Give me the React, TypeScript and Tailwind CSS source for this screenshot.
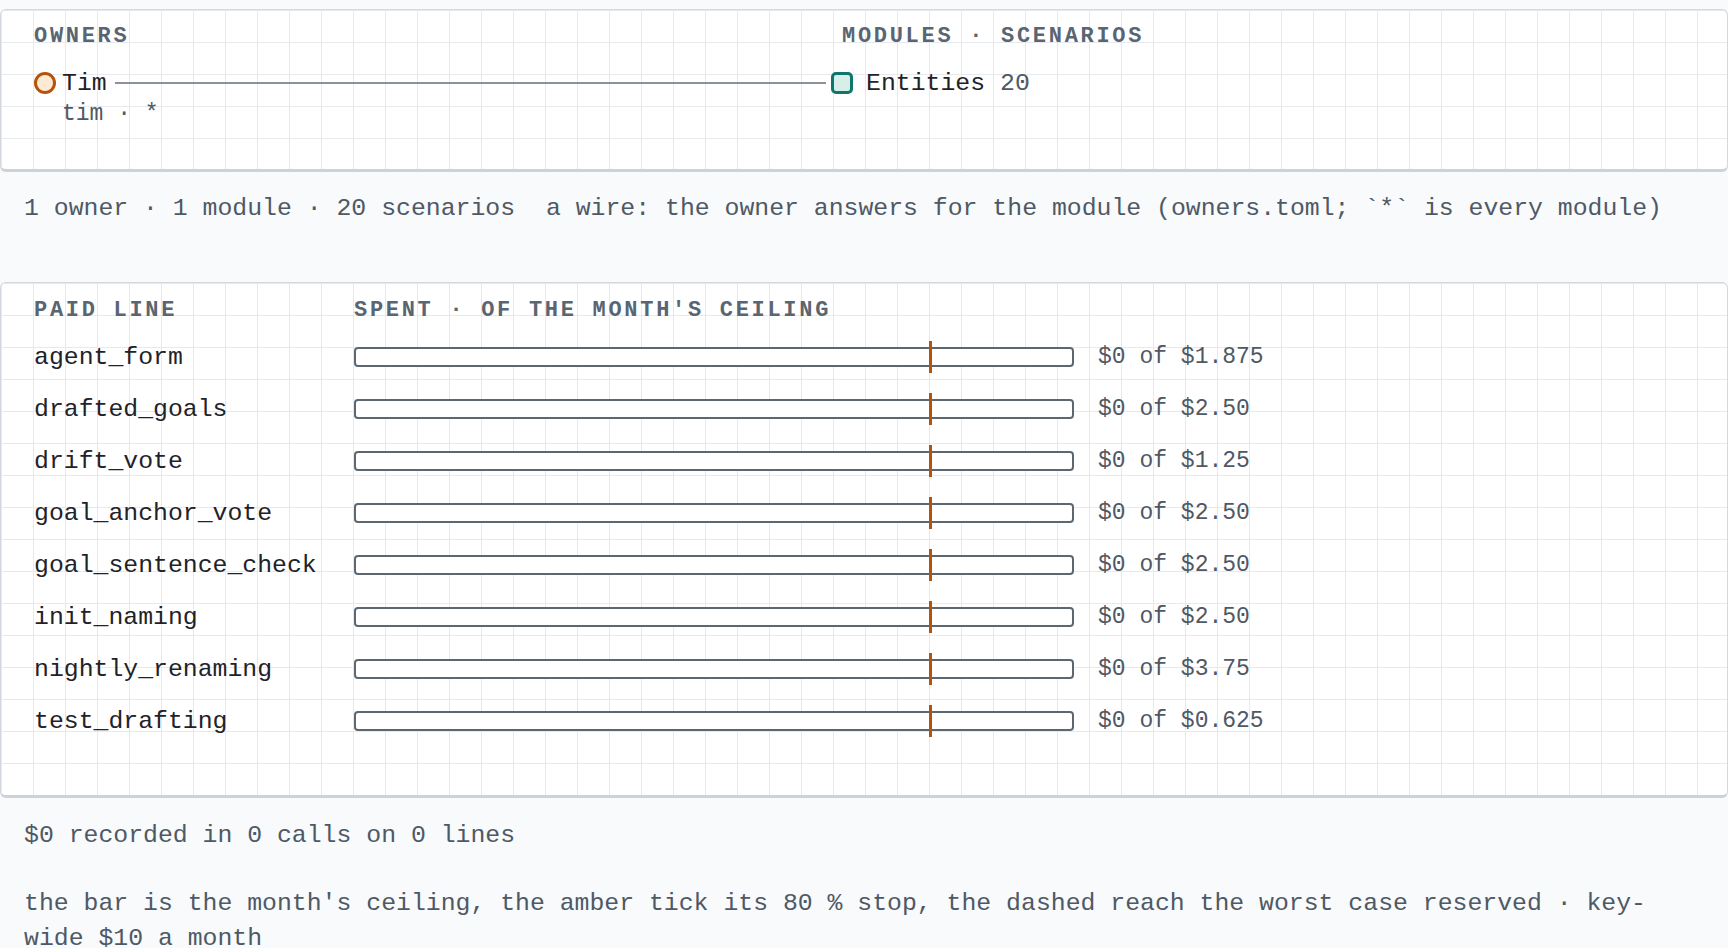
import React from 'react';

interface PaidLine {
  name: string;
  ceiling: string;
}

const lines: PaidLine[] = [
  { name: 'agent_form', ceiling: '$1.875' },
  { name: 'drafted_goals', ceiling: '$2.50' },
  { name: 'drift_vote', ceiling: '$1.25' },
  { name: 'goal_anchor_vote', ceiling: '$2.50' },
  { name: 'goal_sentence_check', ceiling: '$2.50' },
  { name: 'init_naming', ceiling: '$2.50' },
  { name: 'nightly_renaming', ceiling: '$3.75' },
  { name: 'test_drafting', ceiling: '$0.625' },
];

// white card on a 32px graph-paper grid
const panel =
  'rounded-md border border-[#d3d8de] border-b-[3px] border-b-[#cdd2d8] bg-white bg-[linear-gradient(to_right,#e6e9ed_1px,transparent_1px),linear-gradient(to_bottom,#e6e9ed_1px,transparent_1px)] bg-size-[32px_32px]';

const heading = 'text-[22px] leading-6 font-bold tracking-[2.7px] uppercase text-[#5a6572]';

function Heading({ children }: { children: React.ReactNode }) {
  return <h2 className={heading}>{children}</h2>;
}

function CeilingBar({ line }: { line: PaidLine }) {
  return (
    <div className="flex h-[52px] items-center">
      <span className="w-[288px] text-[#1f2328]">{line.name}</span>
      <div className="relative ml-8 h-5 w-[720px] rounded-[4px] border-2 border-[#5d6772] bg-white">
        {/* 80 % stop */}
        <span className="absolute top-[-8px] left-[573px] h-8 w-[3px] bg-[#b45309]" />
      </div>
      <span className="ml-6 text-[23px]">$0 of {line.ceiling}</span>
    </div>
  );
}

export default function App() {
  return (
    <div className="min-h-screen bg-[#f8fafc] pt-[9px] font-['Liberation_Mono','DejaVu_Sans_Mono',monospace] text-[24.8px] leading-[35px] text-[#4f5965]">
      <section className={`${panel} pt-[15px] pb-[40px] pl-[33px]`}>
        <div className="grid grid-cols-[808px_1fr]">
          <div>
            <Heading>Owners</Heading>
            <div className="mt-[18px] flex h-8 items-center">
              <span className="size-[22px] shrink-0 rounded-full border-[3px] border-[#b45309] bg-[#feead4]" />
              <span className="ml-1.5 text-[#1f2328]">Tim</span>
              <span className="mr-4 ml-2 h-0.5 flex-1 bg-[#8b929a]" />
            </div>
            <div className="ml-7 text-[23px] leading-[30px]">tim · *</div>
          </div>
          <div>
            <Heading>Modules · Scenarios</Heading>
            <div className="mt-[18px] flex h-8 items-center">
              <span className="-ml-[11px] size-[22px] shrink-0 rounded-[5px] border-[3px] border-[#0f766e] bg-[#d7eee9]" />
              <span className="ml-[13px] text-[#1f2328]">Entities</span>
              <span className="ml-[15px]">20</span>
            </div>
          </div>
        </div>
      </section>

      <p className="px-6 pt-[19px] pb-[56px] whitespace-nowrap">
        1 owner · 1 module · 20 scenarios{' '}
        <span className="ml-[16px]">
          a wire: the owner answers for the module (owners.toml; `*` is every module)
        </span>
      </p>

      <section className={`${panel} pt-4 pb-[48px] pl-[33px]`}>
        <div className="flex">
          <div className="w-[320px]">
            <Heading>Paid line</Heading>
          </div>
          <Heading>Spent · of the month's ceiling</Heading>
        </div>
        <div className="mt-2">
          {lines.map((line) => (
            <CeilingBar key={line.name} line={line} />
          ))}
        </div>
      </section>

      <div className="px-6 pt-5">
        <p>$0 recorded in 0 calls on 0 lines</p>
        <p className="mt-[33px] max-w-[1660px]">
          the bar is the month's ceiling, the amber tick its 80 % stop, the dashed reach the worst
          case reserved · key-wide $10 a month
        </p>
      </div>
    </div>
  );
}
